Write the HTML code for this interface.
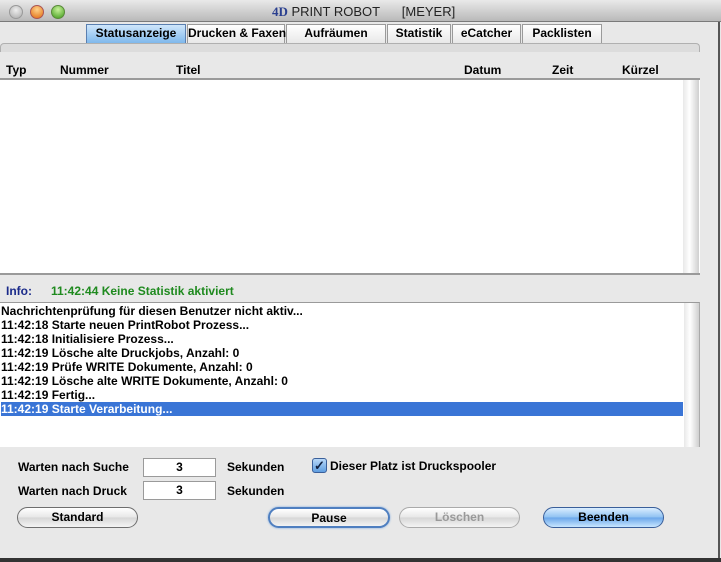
<!DOCTYPE html>
<html><head><meta charset="utf-8"><style>
*{margin:0;padding:0;box-sizing:border-box}
body{width:721px;height:562px;overflow:hidden;background:#e8e8e8;font-family:"Liberation Sans",sans-serif;font-size:12px;font-weight:bold;color:#000;position:relative}
.a{position:absolute;white-space:nowrap}
.n{display:inline-block;white-space:nowrap}
#title{left:0;top:0;width:721px;height:22px;background:linear-gradient(#e9e9e9,#b9b9b9);border-bottom:1px solid #7a7a7a}
.dot{position:absolute;top:5px;width:14px;height:14px;border-radius:50%}
.tab{position:absolute;top:24px;height:19px;background:linear-gradient(#fff,#e8e8e8);border:1px solid #9a9a9a;border-bottom:none;text-align:center;line-height:17px;font-size:12px;white-space:nowrap}
.tab.s{background:linear-gradient(#cfe6fb,#7fb8ec);border-color:#5a7fb0}
.btn{position:absolute;height:21px;border:1px solid #6e6e6e;border-radius:11px;background:linear-gradient(#fff,#e6e6e6 50%,#d6d6d6 51%,#f4f4f4);text-align:center;line-height:19px}
.inp{position:absolute;width:73px;height:19px;background:#fff;border:1px solid #9a9a9a;text-align:center;line-height:17px}
.row{position:absolute;left:1px;height:14px;line-height:14px}
</style></head><body>
<div class="a" id="title"></div>
<div class="dot" style="left:9px;background:radial-gradient(circle at 50% 35%,#eee,#aaa);border:1px solid #999"></div>
<div class="dot" style="left:30px;background:radial-gradient(circle at 50% 30%,#ffd28a,#e06a10);border:1px solid #a55"></div>
<div class="dot" style="left:51px;background:radial-gradient(circle at 50% 30%,#c8f29a,#3f9a1a);border:1px solid #5a8a3a"></div>
<div class="a" style="left:272px;top:4px;font-weight:normal;font-size:13px;color:#222"><span style="font-family:'Liberation Serif',serif;color:#2a3f8f;font-weight:bold">4D</span> PRINT ROBOT&nbsp;&nbsp;&nbsp;&nbsp;&nbsp;&nbsp;[MEYER]</div>
<div class="a" style="left:0;top:43px;width:700px;height:9px;background:#dcdcdc;border:1px solid #b0b0b0;border-bottom:none;border-radius:4px 4px 0 0"></div>
<div class="tab s" style="left:86px;width:100px">Statusanzeige</div>
<div class="tab" style="left:187px;width:98px">Drucken &amp; Faxen</div>
<div class="tab" style="left:286px;width:100px">Aufräumen</div>
<div class="tab" style="left:387px;width:64px">Statistik</div>
<div class="tab" style="left:452px;width:69px">eCatcher</div>
<div class="tab" style="left:522px;width:80px">Packlisten</div>
<div class="a" style="left:718px;top:22px;width:2px;height:540px;background:#555"></div>
<div class="a" style="top:63px;left:6px">Typ</div>
<div class="a" style="top:63px;left:60px">Nummer</div>
<div class="a" style="top:63px;left:176px">Titel</div>
<div class="a" style="top:63px;left:464px">Datum</div>
<div class="a" style="top:63px;left:552px">Zeit</div>
<div class="a" style="top:63px;left:622px">Kürzel</div>
<div class="a" style="left:0;top:78px;width:700px;height:197px;background:#fff;border-top:2px solid #9a9a9a;border-bottom:2px solid #9a9a9a"></div>
<div class="a" style="left:683px;top:80px;width:16px;height:193px;background:linear-gradient(90deg,#e8e8e8,#fff 40%,#cfcfcf)"></div>
<div class="a" style="left:6px;top:284px;color:#1a2a8a">Info:</div>
<div class="a" style="left:51px;top:284px;color:#1f8a1f">11:42:44 Keine Statistik aktiviert</div>
<div class="a" style="left:0;top:302px;width:700px;height:145px;background:#fff;border-top:1px solid #9a9a9a;border-right:1px solid #aaa"></div>
<div class="a" style="left:684px;top:303px;width:15px;height:144px;background:linear-gradient(90deg,#e8e8e8,#fff 40%,#cfcfcf)"></div>
<div class="row" style="top:304px">Nachrichtenprüfung für diesen Benutzer nicht aktiv...</div>
<div class="row" style="top:318px">11:42:18 Starte neuen PrintRobot Prozess...</div>
<div class="row" style="top:332px">11:42:18 Initialisiere Prozess...</div>
<div class="row" style="top:346px">11:42:19 Lösche alte Druckjobs, Anzahl: 0</div>
<div class="row" style="top:360px">11:42:19 Prüfe WRITE Dokumente, Anzahl: 0</div>
<div class="row" style="top:374px">11:42:19 Lösche alte WRITE Dokumente, Anzahl: 0</div>
<div class="row" style="top:388px">11:42:19 Fertig...</div>
<div class="a" style="left:1px;top:402px;width:682px;height:14px;background:#3a75d6"></div>
<div class="row" style="top:402px;color:#fff">11:42:19 Starte Verarbeitung...</div>
<div class="a" style="left:18px;top:460px">Warten nach Suche</div>
<div class="a" style="left:18px;top:484px">Warten nach Druck</div>
<div class="inp" style="left:143px;top:458px">3</div>
<div class="inp" style="left:143px;top:481px">3</div>
<div class="a" style="left:227px;top:460px">Sekunden</div>
<div class="a" style="left:227px;top:484px">Sekunden</div>
<div class="a" style="left:312px;top:458px;width:15px;height:15px;border:1px solid #3a5f9a;border-radius:3px;background:linear-gradient(#b8d8f8,#5f9ee0);color:#102040;font-size:13px;line-height:13px;text-align:center">✓</div>
<div class="a" style="left:330px;top:459px">Dieser Platz ist Druckspooler</div>
<div class="btn" style="left:17px;top:507px;width:121px">Standard</div>
<div class="btn" style="left:268px;top:507px;width:122px;border:2px solid #4f7fc0;box-shadow:0 0 2px #7aa8e0">Pause</div>
<div class="btn" style="left:399px;top:507px;width:121px;border-color:#aaa;color:#999">Löschen</div>
<div class="btn" style="left:543px;top:507px;width:121px;border-color:#3a5f9a;background:linear-gradient(#dbeeff,#8ec1f2 50%,#6aa6ea 51%,#c8e6ff)">Beenden</div>
<div class="a" style="left:0;top:558px;width:721px;height:4px;background:#333"></div>
</body></html>
